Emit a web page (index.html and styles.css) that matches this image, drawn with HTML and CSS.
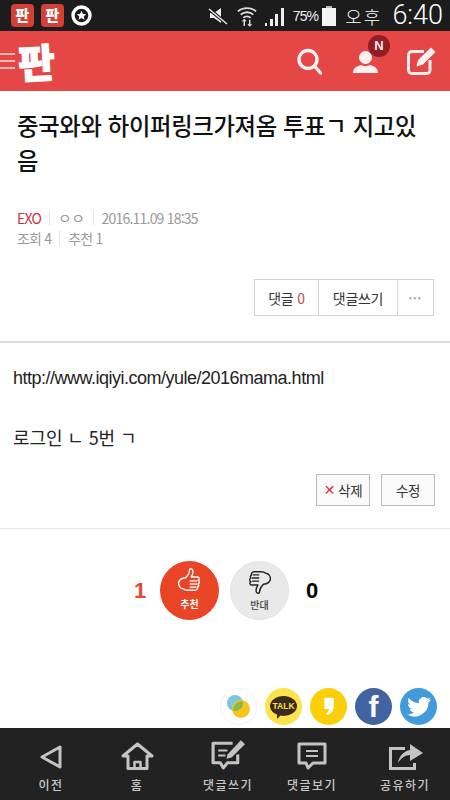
FILE: index.html
```html
<!DOCTYPE html>
<html lang="ko">
<head>
    <meta charset="UTF-8">
    <title>판</title>
    <link rel="stylesheet" href="styles.css">
</head>
<body>
    <div class="status">
        <div class="status-left">
            <span class="app-icon">판</span>
            <span class="app-icon">판</span>
            <svg class="star-icon" width="21" height="21" viewBox="0 0 21 21"><circle cx="10.5" cy="10.5" r="8.5" fill="none" stroke="#fff" stroke-width="3.4"/><path d="M10.5 5.8l1.4 3.1 3.3.3-2.5 2.2.8 3.3-3-1.700-3 1.700.8-3.300-2.500-2.200 3.300-.3z" fill="#fff"/></svg>
        </div>
        <div class="status-right">
            <svg width="20" height="20" viewBox="0 0 20 20"><path d="M2 7h4l7-5v15l-7-5H2z" fill="#eee"/><path d="M1 3l18 15" stroke="#1c1c1c" stroke-width="3.5"/><path d="M1 3l18 15" stroke="#eee" stroke-width="1.4"/></svg>
            <svg class="wifi" width="20" height="24" viewBox="0 0 22 24" fill="none" stroke="#ddd" stroke-width="2"><path d="M1 7c5-5 15-5 20 0M4 10.500c4-3.500 10-3.500 14 0M7 14c2.500-2 5.500-2 8 0"/><path d="M8 16v7M14 16v7" stroke-width="1.600"/><path d="M6 18l2-2 2 2M12 21l2 2 2-2" stroke-width="1.300"/></svg>
            <svg class="signal" width="22" height="22" viewBox="0 0 22 22" fill="#eee"><rect x="1" y="18" width="2" height="3"/><rect x="6" y="14" width="3" height="7"/><rect x="11" y="9" width="3" height="12"/><rect x="17" y="3" width="3" height="18"/></svg>
            <span class="pct">75%</span>
            <span class="battery"><span class="battery-cap"></span><span class="battery-body"></span></span>
            <span class="ampm">오후</span>
            <span class="clock">6:40</span>
        </div>
    </div>

    <header class="topbar">
        <div class="brand">
            <span class="burger"><i></i><i></i><i></i></span>
            <span class="logo">판</span>
        </div>
        <div class="top-actions">
            <svg class="ic-search" width="25" height="27" viewBox="0 0 25 27" fill="none" stroke="#fdf0f0" stroke-width="3.400"><circle cx="11" cy="11.500" r="9"/><path d="M17.500 18l6 7" stroke-linecap="round"/></svg>
            <div class="user-wrap">
                <svg width="25" height="22" viewBox="0 0 25 22" fill="#fdf0f0"><circle cx="12.500" cy="6.500" r="6.500"/><path d="M0 22c0-5 4-7 8-8 3 1.500 6 1.500 9 0 4 1 8 3 8 8z"/></svg>
                <span class="badge">N</span>
            </div>
            <svg class="ic-edit" width="32" height="32" viewBox="0 0 32 32" fill="none"><path d="M24 15v10a3.500 3.500 0 0 1-3.500 3.500H6A3.500 3.500 0 0 1 2.500 25V10A3.500 3.500 0 0 1 6 6.500h12" stroke="#fdf0f0" stroke-width="3"/><path d="M12 15L25 2.500l4.500 4.500L17 19.500l-6.500 2z" fill="#fdf0f0"/></svg>
        </div>
    </header>

    <main class="content">
        <section class="post-head">
            <h1 class="title">중국와와 하이퍼링크가져옴 투표ㄱ 지고있음</h1>
            <div class="meta">
                <span class="cat">EXO</span><span class="sep"></span><span class="nick">ㅇㅇ</span><span class="sep"></span><span>2016.11.09 18:35</span>
            </div>
            <div class="meta">
                <span>조회 4</span><span class="sep"></span><span>추천 1</span>
            </div>
            <div class="tools">
                <div class="tool-group">
                    <span class="tool tool-count">댓글 <em>0</em></span>
                    <span class="tool tool-write">댓글쓰기</span>
                    <span class="tool tool-more">•••</span>
                </div>
            </div>
        </section>

        <section class="post-body">
            <p class="link-line">http://www.iqiyi.com/yule/2016mama.html</p>
            <p class="body-line">로그인 ㄴ 5번 ㄱ</p>
            <div class="edit-btns">
                <span class="edit-btn btn-del"><b>✕</b> 삭제</span>
                <span class="edit-btn btn-mod">수정</span>
            </div>
        </section>

        <section class="vote">
            <span class="vote-num up-num">1</span>
            <div class="vote-btn vote-up">
                <svg width="25" height="27" viewBox="0 0 32 33" fill="none" stroke="#fff" stroke-width="1.800" stroke-linecap="round" stroke-linejoin="round"><path d="M11 13c3-3 5-6 5-10 0-2 3-2 4 0 1 3 0 6-2 9h8c3 0 3 4 1 4 2 1 2 4 0 5 1 1 1 3-1 4 1 1 0 4-3 4H14c-3 0-5-1-6-2-4 0-6-4-6-7s3-7 9-7z"/><path d="M17 17h8M17 21h8M17 25h7"/></svg>
                <span class="vote-label">추천</span>
            </div>
            <div class="vote-btn vote-down">
                <svg width="25" height="27" viewBox="0 0 32 33" fill="none" stroke="#222" stroke-width="1.800" stroke-linecap="round" stroke-linejoin="round"><path d="M21 20c-3 3-5 6-5 10 0 2-3 2-4 0-1-3 0-6 2-9H6c-3 0-3-4-1-4-2-1-2-4 0-5-1-1-1-3 1-4-1-1 0-4 3-4h9c3 0 5 1 6 2 4 0 6 4 6 7s-3 7-9 7z"/><path d="M15 16H7M15 12H7M15 8H8"/></svg>
                <span class="vote-label">반대</span>
            </div>
            <span class="vote-num down-num">0</span>
        </section>

        <section class="share">
            <span class="sns sns-story">
                <svg width="28" height="28" viewBox="0 0 28 28"><circle cx="10" cy="10" r="8" fill="#7cc6de"/><circle cx="16" cy="16" r="9" fill="#fac31e"/><path d="M8 17.800a9 9 0 0 1 9.800-9.600A8 8 0 0 1 8 17.800z" fill="#8cb84a"/></svg>
            </span>
            <span class="sns sns-talk"><span class="talk-bubble">TALK</span></span>
            <span class="sns sns-page">
                <svg width="12" height="19" viewBox="0 0 14 24" fill="#fff"><path d="M1 1h12v10c0 6-3 10-8 12l-1.500-2.500c2-1.500 3.500-3.500 3.500-5.500H1z"/></svg>
            </span>
            <span class="sns sns-fb">f</span>
            <span class="sns sns-tw">
                <svg width="24" height="20" viewBox="0 0 24 20" fill="#fff"><path d="M24 2.400c-.9.400-1.800.7-2.800.8 1-.6 1.800-1.600 2.200-2.700-1 .6-2 1-3.100 1.200A4.900 4.900 0 0 0 11.900 6.200C7.800 6 4.200 4 1.700.9c-1.300 2.200-.7 5.100 1.500 6.600-.8 0-1.600-.2-2.200-.6 0 2.400 1.700 4.400 3.900 4.900-.7.200-1.500.2-2.200.1.600 2 2.400 3.400 4.600 3.400A9.900 9.900 0 0 1 0 17.300 14 14 0 0 0 21.500 5.500c1-.7 1.800-1.900 2.500-3.100z"/></svg>
            </span>
        </section>
    </main>

    <nav class="softbar">
        <div class="nav-item">
            <div class="nav-icon">
                <svg width="24" height="26" viewBox="0 0 24 26" fill="none" stroke="#c4c4c4" stroke-width="3" stroke-linejoin="round"><path d="M21 3v20L3 13z"/></svg>
            </div>
            <span>이전</span>
        </div>
        <div class="nav-item nav-home">
            <div class="nav-icon">
                <svg width="33" height="28" viewBox="0 0 33 28" fill="none" stroke="#c4c4c4" stroke-width="3" stroke-linejoin="round"><path d="M2 14L16.500 2 31 14h-5v12.500H7V14z"/><path d="M13.500 26v-6h6v6" stroke-width="2.500"/></svg>
            </div>
            <span>홈</span>
        </div>
        <div class="nav-item nav-write">
            <div class="nav-icon">
                <svg width="37" height="33" viewBox="0 0 36 32" fill="none" stroke="#c4c4c4" stroke-width="3" stroke-linejoin="round"><path d="M22 6H3v19h7l3 5 4-5h10V17"/><path d="M8 13h9M8 18h7" stroke-width="2"/><path d="M17 17L30 3l4 4-13 13-5 1z" fill="#c4c4c4" stroke="none"/></svg>
            </div>
            <span>댓글쓰기</span>
        </div>
        <div class="nav-item nav-view">
            <div class="nav-icon">
                <svg width="30" height="28" viewBox="0 0 30 28" fill="none" stroke="#c4c4c4" stroke-width="3" stroke-linejoin="round"><path d="M2 2h26v19H16l-5 5-2-5H2z"/><path d="M9 9h12M9 14h12" stroke-width="2"/></svg>
            </div>
            <span>댓글보기</span>
        </div>
        <div class="nav-item nav-share">
            <div class="nav-icon">
                <svg width="35" height="26" viewBox="0 0 35 26" fill="none" stroke="#c4c4c4" stroke-width="3" stroke-linejoin="miter"><path d="M17 4.500H2.500v20h24V19"/><path d="M10 19c1-7 6-12 12-13V0l13 9-13 8v-6c-5 0-9 3-12 8z" fill="#c4c4c4" stroke="none"/></svg>
            </div>
            <span>공유하기</span>
        </div>
    </nav>
</body>
</html>
```

FILE: styles.css
```css
* {
    box-sizing: border-box;
}

html, body {
    height: 100%;
}

body {
    margin: 0;
    width: 450px;
    height: 800px;
    overflow: hidden;
    display: flex;
    flex-direction: column;
    background: #fff;
    font-family: "Noto Sans CJK KR", "Liberation Sans", sans-serif;
    color: #222;
}

/* status bar */
.status {
    height: 31px;
    flex: none;
    display: flex;
    justify-content: space-between;
    align-items: center;
    background: #1c1c1c;
    padding: 0 7px 0 11px;
}

.status-left {
    display: flex;
    align-items: center;
    gap: 7px;
}

.status-right {
    display: flex;
    align-items: center;
    color: #eee;
}

.app-icon {
    width: 23px;
    height: 23px;
    border-radius: 4px;
    background: #d63f36;
    color: #fff;
    font-size: 15px;
    font-weight: 900;
    line-height: 22px;
    text-align: center;
}

.wifi {
    margin-left: 9px;
}

.signal {
    margin-left: 7px;
}

.pct {
    margin-left: 7px;
    font-family: "Liberation Sans", sans-serif;
    font-size: 14px;
    letter-spacing: -0.8px;
}

.battery {
    margin-left: 4px;
    width: 14px;
    display: flex;
    flex-direction: column;
    align-items: center;
}

.battery-cap {
    width: 6px;
    height: 2px;
    background: #bbb;
}

.battery-body {
    width: 14px;
    height: 18px;
    background: #f4f4f4;
}

.ampm {
    margin-left: 9px;
    font-size: 18px;
    font-weight: 300;
    letter-spacing: 2px;
    color: #fff;
}

.clock {
    margin-left: 10px;
    font-family: Roboto, "Liberation Sans", sans-serif;
    font-size: 27px;
    font-weight: 300;
    line-height: 31px;
    color: #fff;
}

/* red header */
.topbar {
    height: 60px;
    flex: none;
    display: flex;
    justify-content: space-between;
    align-items: center;
    background: #e54646;
    padding-right: 12px;
}

.brand {
    display: flex;
    align-items: center;
}

.burger {
    width: 15px;
    display: flex;
    flex-direction: column;
    gap: 5px;
}

.burger i {
    display: block;
    height: 2px;
    background: #f7b5b5;
}

.logo {
    margin-left: 3px;
    color: #fff;
    font-size: 40px;
    font-weight: 900;
    line-height: 44px;
    transform: rotate(-3deg);
    -webkit-text-stroke: 1px #fff;
}

.top-actions {
    display: flex;
    align-items: center;
}

.ic-search {
    margin-top: 1px;
}

.user-wrap {
    position: relative;
    display: flex;
    margin: 2px 0 0 31px;
}

.ic-edit {
    margin-left: 28px;
}

.badge {
    position: absolute;
    top: -16px;
    right: -12px;
    width: 22px;
    height: 22px;
    border-radius: 50%;
    background: #8f1d22;
    color: #f8e8e8;
    font-family: "Liberation Sans", sans-serif;
    font-size: 13px;
    font-weight: 700;
    line-height: 22px;
    text-align: center;
}

/* page */
.content {
    flex: 1;
    min-height: 0;
    display: flex;
    flex-direction: column;
}

.post-head {
    height: 252px;
    flex: none;
    padding: 17px 16px 0 17px;
    border-bottom: 2px solid #dcdcdc;
}

.title {
    margin: 0;
    font-size: 23.300px;
    font-weight: 500;
    line-height: 35px;
    letter-spacing: -0.3px;
    color: #111;
    word-break: break-all;
}

.meta {
    display: flex;
    align-items: center;
    font-size: 14px;
    line-height: 20px;
    letter-spacing: -0.8px;
    color: #999;
}

.title + .meta {
    margin-top: 30px;
}

.cat {
    color: #c8323f;
}

.nick {
    letter-spacing: -0.5px;
    font-size: 15px;
}

.sep {
    width: 1px;
    height: 14px;
    margin: 0 8px;
    background: #e4e4e4;
}

.tools {
    display: flex;
    justify-content: flex-end;
    margin-top: 31px;
}

.tool-group {
    display: flex;
    height: 37px;
    border: 1px solid #d4d4d4;
}

.tool {
    display: flex;
    align-items: center;
    justify-content: center;
    font-size: 14px;
    letter-spacing: -0.3px;
    color: #333;
    border-right: 1px solid #d4d4d4;
}

.tool em {
    margin-left: 4px;
    font-style: normal;
    color: #c8484c;
}

.tool-count {
    width: 64px;
}

.tool-write {
    width: 79px;
}

.tool-more {
    width: 35px;
    border-right: 0;
    font-size: 9px;
    letter-spacing: 1.500px;
    color: #aaa;
}

.post-body {
    height: 186px;
    flex: none;
    padding: 23px 15px 0 13px;
    border-bottom: 1px solid #e6e6e6;
}

.link-line, .body-line {
    margin: 0;
    font-size: 18px;
    line-height: 24px;
    color: #222;
    letter-spacing: -0.1px;
}

.link-line {
    font-family: "Liberation Sans", sans-serif;
    letter-spacing: -0.5px;
}

.body-line {
    margin-top: 35px;
}

.edit-btns {
    display: flex;
    justify-content: flex-end;
    gap: 11px;
    margin-top: 25px;
}

.edit-btn {
    height: 32px;
    display: flex;
    align-items: center;
    justify-content: center;
    border: 1px solid #bcbcbc;
    background: #fafafa;
    font-size: 13.500px;
    letter-spacing: -0.3px;
    color: #333;
}

.edit-btn b {
    margin-right: 3px;
    font-size: 14px;
    color: #d8323c;
    font-family: "DejaVu Sans", sans-serif;
}

.btn-del {
    width: 54px;
}

.btn-mod {
    width: 54px;
}

.vote {
    height: 125px;
    flex: none;
    display: flex;
    align-items: center;
    padding: 0 0 2px 134px;
}

.vote-num {
    font-family: "Liberation Sans", sans-serif;
    font-size: 22px;
    font-weight: 700;
}

.up-num {
    width: 26px;
    color: #e5472f;
}

.down-num {
    margin-left: 17px;
    color: #000;
}

.vote-btn {
    width: 59px;
    height: 59px;
    border-radius: 50%;
    display: flex;
    flex-direction: column;
    align-items: center;
    padding-top: 6px;
}

.vote-btn svg {
    flex: none;
}

.vote-up {
    background: #ea4427;
    color: #fff;
}

.vote-down {
    margin-left: 11px;
    background: #e9e9e9;
    border: 1px solid #e2e2e2;
    color: #444;
}

.vote-label {
    margin-top: 3px;
    font-size: 10px;
    font-weight: 700;
    line-height: 13px;
}

.vote-down .vote-label {
    font-weight: 500;
}

.share {
    flex: 1;
    display: flex;
    justify-content: flex-end;
    align-items: flex-end;
    gap: 8px;
    padding: 0 13px 3px 0;
}

.sns {
    width: 37px;
    height: 37px;
    border-radius: 50%;
    display: flex;
    align-items: center;
    justify-content: center;
}

.sns-story {
    border: 1px solid #f2f2f2;
    background: #fff;
}

.sns-talk {
    background: #fde24a;
}

.talk-bubble {
    position: relative;
    width: 27px;
    height: 20px;
    margin-bottom: 2px;
    border-radius: 50%;
    background: #3c2a1e;
    color: #fde24a;
    font-family: "Liberation Sans", sans-serif;
    font-size: 8.500px;
    font-weight: 700;
    line-height: 20px;
    text-align: center;
}

.talk-bubble::after {
    content: "";
    position: absolute;
    left: 7px;
    bottom: -3px;
    border-top: 5px solid #3c2a1e;
    border-right: 5px solid transparent;
}

.sns-page {
    background: #fbce0a;
}

.sns-fb {
    background: #41639f;
    color: #fff;
    font-family: "Liberation Sans", sans-serif;
    font-size: 30px;
    font-weight: 700;
    line-height: 37px;
}

.sns-tw {
    background: #429bdc;
}

/* bottom bar */
.softbar {
    height: 72px;
    flex: none;
    display: flex;
    background: #222;
    padding: 8px 0 0 11px;
}

.nav-item {
    width: 80px;
    flex: none;
    display: flex;
    flex-direction: column;
    align-items: center;
    color: #c8c8c8;
    font-size: 12px;
    font-weight: 500;
    letter-spacing: 1.500px;
}

.nav-home {
    margin-left: 6px;
}

.nav-write {
    margin-left: 11px;
}

.nav-view {
    margin-left: 4px;
}

.nav-share {
    margin-left: 13px;
}

.nav-icon {
    height: 34px;
    display: flex;
    align-items: flex-end;
}

.nav-item span {
    line-height: 18px;
    margin-top: 6px;
    white-space: nowrap;
}
```
